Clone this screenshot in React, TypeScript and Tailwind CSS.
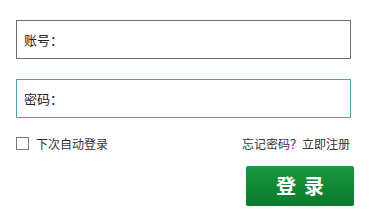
export default function App() {
  return (
    <div
      className="w-[375px] h-[219px] bg-white pl-4 pt-5"
      style={{ fontFamily: '"Noto Sans CJK SC", "Liberation Sans", sans-serif' }}
    >
      <div className="w-[335px]">
        {/* Account */}
        <label className="flex items-center h-[39px] border border-[#6f6f6f] pl-[7px] text-[13px] text-[#222]">
          <span>账号：</span>
          <input className="flex-1 h-full outline-none bg-transparent" />
        </label>

        {/* Password */}
        <label className="flex items-center h-[39px] mt-5 border border-[#4fa3b3] pl-[7px] text-[13px] text-[#222]">
          <span>密码：</span>
          <input type="password" className="flex-1 h-full outline-none bg-transparent" />
        </label>

        {/* Options */}
        <div className="flex items-center justify-between mt-[19px] text-[12px] text-[#333] leading-none">
          <label className="flex items-center gap-[7px]">
            <span className="w-[13px] h-[13px] border border-[#7a7a7a] bg-white" />
            <span>下次自动登录</span>
          </label>
          <div className="pr-[1px]">
            <a>忘记密码？</a>
            <a>立即注册</a>
          </div>
        </div>

        {/* Submit */}
        <div className="flex justify-end mt-[16px] mr-[-3px]">
          <button className="w-[108px] h-[40px] rounded-[2px] bg-gradient-to-b from-[#18993f] to-[#0c7a2d] text-white text-[20px] tracking-[8px] pl-[8px] font-bold">
            登录
          </button>
        </div>
      </div>
    </div>
  );
}
